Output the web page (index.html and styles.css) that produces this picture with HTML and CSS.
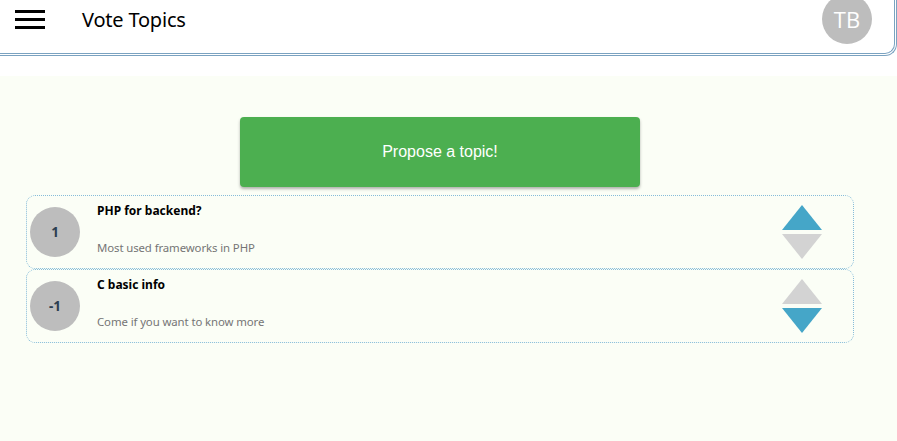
FILE: index.html
```html
<!DOCTYPE html>
<html lang="en">
<head>
<meta charset="utf-8">
<title>Vote Topics</title>
<link rel="stylesheet" href="styles.css">
</head>
<body>
<header class="topbar">
  <button class="menu-btn" aria-label="Menu">
    <span class="bar"></span><span class="bar"></span><span class="bar"></span>
  </button>
  <h1 class="title">Vote Topics</h1>
  <div class="avatar">TB</div>
</header>
<main class="main">
  <button class="propose">Propose a topic!</button>
  <ul class="topics">
    <li class="topic">
      <div class="score">1</div>
      <div class="info">
        <div class="topic-title">PHP for backend?</div>
        <div class="topic-desc">Most used frameworks in PHP</div>
      </div>
      <div class="votes">
        <span class="arrow up active"></span>
        <span class="arrow down"></span>
      </div>
    </li>
    <li class="topic">
      <div class="score">-1</div>
      <div class="info">
        <div class="topic-title">C basic info</div>
        <div class="topic-desc">Come if you want to know more</div>
      </div>
      <div class="votes">
        <span class="arrow up"></span>
        <span class="arrow down active"></span>
      </div>
    </li>
  </ul>
</main>
</body>
</html>
```
FILE: styles.css
```css
* { box-sizing: border-box; }
html, body { margin: 0; padding: 0; }
body {
  background: #fff;
  font-family: "Noto Sans", "Open Sans", sans-serif;
  width: 897px;
  height: 441px;
  overflow: hidden;
}
.topbar {
  display: flex;
  align-items: center;
  height: 56px;
  padding: 0 22px 14px 15px;
  background: #fff;
  border-bottom: 3px double #7aa2c0;
  border-right: 3px double #7aa2c0;
  border-bottom-right-radius: 12px;
}
.menu-btn {
  display: flex;
  flex-direction: column;
  gap: 5px;
  width: 30px;
  padding: 0;
  border: 0;
  background: none;
}
.bar {
  display: block;
  height: 3px;
  width: 30px;
  background: #000;
}
.title {
  margin: 0 0 0 37px;
  font-size: 20px;
  font-weight: 400;
  color: #000;
  flex: 1;
  letter-spacing: -0.2px;
}
.avatar {
  width: 50px;
  height: 50px;
  border-radius: 50%;
  background: #bdbdbd;
  color: #fff;
  font-family: "Open Sans", sans-serif;
  font-size: 22px;
  display: flex;
  align-items: center;
  justify-content: center;
  margin-top: -2px;
}
.main {
  margin-top: 20px;
  background: #fbfef6;
  height: 365px;
  padding: 41px 43px 0 26px;
}
.propose {
  display: block;
  margin: 0 auto;
  width: 400px;
  height: 70px;
  border: 0;
  border-radius: 4px;
  background: #4caf50;
  color: #fff;
  font-family: "Liberation Sans", Arial, sans-serif;
  font-size: 16px;
  box-shadow: 0 2px 3px rgba(0,0,0,0.3);
}
.topics {
  list-style: none;
  margin: 8px 0 0;
  padding: 0;
}
.topic {
  display: flex;
  align-items: center;
  height: 74px;
  border: 1px dotted #86bcd9;
  border-radius: 9px;
  padding: 0 31px 0 3px;
}
.score {
  width: 50px;
  height: 50px;
  border-radius: 50%;
  background: #bdbdbd;
  color: #2c3e50;
  font-weight: 700;
  font-size: 13.5px;
  display: flex;
  align-items: center;
  justify-content: center;
  flex: none;
}
.info {
  flex: 1;
  align-self: stretch;
  display: flex;
  flex-direction: column;
  justify-content: space-between;
  padding: 6px 0 13px 17px;
}
.topic-title {
  font-size: 12px;
  font-weight: 700;
  color: #000;
}
.topic-desc {
  font-size: 11.4px;
  color: #757575;
  letter-spacing: -0.1px;
}
.votes {
  display: flex;
  flex-direction: column;
  gap: 4px;
}
.arrow {
  display: block;
  width: 0;
  height: 0;
  border-left: 20px solid transparent;
  border-right: 20px solid transparent;
}
.arrow.up { border-bottom: 25px solid #d3d3d3; }
.arrow.down { border-top: 25px solid #d3d3d3; }
.arrow.up.active { border-bottom-color: #45a6c8; }
.arrow.down.active { border-top-color: #45a6c8; }
```
